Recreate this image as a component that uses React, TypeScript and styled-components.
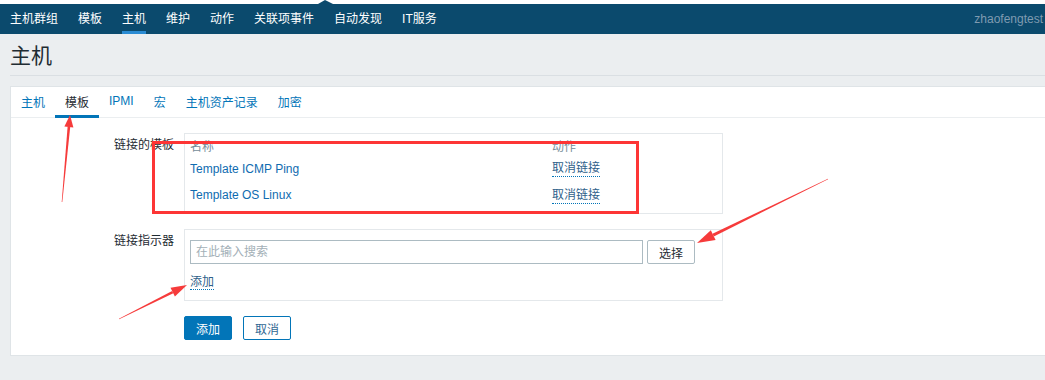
import styled, { createGlobalStyle } from "styled-components";

const GlobalStyle = createGlobalStyle`
  html, body {
    margin: 0;
    padding: 0;
    background: #ebeef0;
    overflow: hidden;
  }
  body {
    font-family: "Liberation Sans", "Noto Sans CJK SC", sans-serif;
    font-size: 12px;
    color: #1f2c33;
  }
  * {
    box-sizing: border-box;
  }
`;

const Page = styled.div`
  position: relative;
  width: 1045px;
  height: 380px;
  overflow: hidden;
`;

const TopStrip = styled.div`
  background: #ffffff;
  padding-top: 4px;
`;

const TopNav = styled.nav`
  position: relative;
  display: flex;
  align-items: stretch;
  height: 30px;
  background: #0b4a6d;

  &::before {
    content: "";
    position: absolute;
    top: -4px;
    left: 318px;
    border-left: 7px solid transparent;
    border-right: 8px solid transparent;
    border-bottom: 4px solid #0b4a6d;
  }
`;

const NavItem = styled.a<{ $active?: boolean }>`
  display: flex;
  align-items: center;
  margin: 0 10px;
  padding-top: 3px;
  border-bottom: 3px solid ${(p) => (p.$active ? "#2a8bd3" : "transparent")};
  color: #ffffff;
  text-decoration: none;
  white-space: nowrap;
  line-height: 16px;
`;

const UserName = styled.span`
  display: flex;
  align-items: center;
  margin-left: auto;
  margin-right: 2px;
  color: #7f9bb1;
  white-space: nowrap;
`;

const Header = styled.header`
  display: flex;
  align-items: center;
  height: 42px;
  margin-left: 10px;
  padding-top: 3px;
  border-bottom: 1px solid #dadfe3;
`;

const Title = styled.h1`
  margin: 0;
  font-size: 21px;
  font-weight: normal;
  line-height: 24px;
  color: #1f2c33;
`;

const Content = styled.main`
  padding: 10px 0 0 10px;
`;

const Panel = styled.section`
  background: #ffffff;
  border: 1px solid #dfe4e7;
  border-right: none;
`;

const TabList = styled.div`
  display: flex;
  height: 31px;
  border-bottom: 1px solid #ebeef0;
`;

const Tab = styled.a<{ $active?: boolean }>`
  display: flex;
  align-items: center;
  height: 31px;
  margin-bottom: -1px;
  padding: 0 10px;
  border-bottom: 3px solid ${(p) => (p.$active ? "#0275b8" : "transparent")};
  color: ${(p) => (p.$active ? "#1f2c33" : "#0275b8")};
  text-decoration: none;
  white-space: nowrap;
`;

const Form = styled.div`
  display: grid;
  grid-template-columns: 163px 539px;
  column-gap: 10px;
  row-gap: 15px;
  padding: 15px 0;
`;

const Label = styled.div`
  text-align: right;
  padding-top: 4px;
  line-height: 16px;
  color: #1f2c33;
`;

const FieldBox = styled.div<{ $pad?: string }>`
  border: 1px solid #e4e8eb;
  padding: ${(p) => p.$pad || "0 5px 4px"};
`;

const TableRow = styled.div<{ $h: number; $head?: boolean }>`
  display: grid;
  grid-template-columns: 362px 1fr;
  align-items: center;
  height: ${(p) => p.$h}px;
  color: ${(p) => (p.$head ? "#768d99" : "#1f2c33")};
`;

const Link = styled.a`
  color: #0f6cb0;
  text-decoration: none;
`;

const ActionLink = styled.a`
  justify-self: start;
  color: #2f5f8a;
  line-height: 16px;
  text-decoration: none;
  border-bottom: 1px dotted #0275b8;
`;

const SearchRow = styled.div`
  display: flex;
  gap: 4px;
`;

const SearchInput = styled.input`
  width: 453px;
  height: 24px;
  padding: 0 5px;
  border: 1px solid #acbbc2;
  font-family: inherit;
  font-size: 12px;
  color: #1f2c33;

  &::placeholder {
    color: #a3b0b7;
  }
`;

const Button = styled.button<{ $variant?: "primary" | "outline" | "plain" }>`
  height: 24px;
  padding: 0 11px;
  border-radius: 2px;
  font-family: inherit;
  font-size: 12px;
  cursor: pointer;
  border: 1px solid
    ${(p) => (p.$variant === "plain" ? "#acbbc2" : "#0275b8")};
  background: ${(p) => (p.$variant === "primary" ? "#0275b8" : "#ffffff")};
  color: ${(p) =>
    p.$variant === "primary"
      ? "#ffffff"
      : p.$variant === "outline"
      ? "#2f6793"
      : "#1f2c33"};
`;

const AddRow = styled.div`
  margin-top: 10px;
  height: 17px;
`;

const Actions = styled.div`
  grid-column: 2;
  display: flex;
  gap: 11px;
`;

const Overlay = styled.svg`
  position: absolute;
  left: 0;
  top: 0;
  pointer-events: none;
`;

const navItems = ["主机群组", "模板", "主机", "维护", "动作", "关联项事件", "自动发现", "IT服务"];
const tabs = ["主机", "模板", "IPMI", "宏", "主机资产记录", "加密"];
const templates = ["Template ICMP Ping", "Template OS Linux"];

// red hand-drawn annotation arrows, tail -> tip
const arrows = [
  { tx: 62, ty: 202, hx: 70, hy: 115, len: 12, w: 9, sw: 2.6 },
  { tx: 828, ty: 179, hx: 697, hy: 243, len: 18, w: 11, sw: 3 },
  { tx: 119, ty: 319, hx: 187, hy: 285, len: 16, w: 10, sw: 2.6 },
];

function arrowShapes(a: (typeof arrows)[number]) {
  const dx = a.hx - a.tx;
  const dy = a.hy - a.ty;
  const l = Math.hypot(dx, dy);
  const ux = dx / l;
  const uy = dy / l;
  const nx = -uy;
  const ny = ux;
  const bx = a.hx - ux * a.len;
  const by = a.hy - uy * a.len;
  const pt = (x: number, y: number) => `${x.toFixed(1)},${y.toFixed(1)}`;
  const shaft = [
    pt(a.tx + nx * 0.3, a.ty + ny * 0.3),
    pt(bx + nx * (a.sw / 2), by + ny * (a.sw / 2)),
    pt(bx - nx * (a.sw / 2), by - ny * (a.sw / 2)),
    pt(a.tx - nx * 0.3, a.ty - ny * 0.3),
  ].join(" ");
  const head = [
    pt(a.hx, a.hy),
    pt(bx + nx * (a.w / 2), by + ny * (a.w / 2)),
    pt(bx - nx * (a.w / 2), by - ny * (a.w / 2)),
  ].join(" ");
  return { shaft, head };
}

function App() {
  return (
    <Page>
      <GlobalStyle />
      <TopStrip>
        <TopNav>
          {navItems.map((item) => (
            <NavItem key={item} $active={item === "主机"}>
              {item}
            </NavItem>
          ))}
          <UserName>zhaofengtest</UserName>
        </TopNav>
      </TopStrip>

      <Header>
        <Title>主机</Title>
      </Header>

      <Content>
        <Panel>
          <TabList>
            {tabs.map((t) => (
              <Tab key={t} $active={t === "模板"}>
                {t}
              </Tab>
            ))}
          </TabList>

          <Form>
            <Label>链接的模板</Label>
            <FieldBox>
              <TableRow $h={22} $head>
                <span>名称</span>
                <span>动作</span>
              </TableRow>
              {templates.map((t, i) => (
                <TableRow key={t} $h={i === 0 ? 25 : 28}>
                  <Link>{t}</Link>
                  <ActionLink>取消链接</ActionLink>
                </TableRow>
              ))}
            </FieldBox>

            <Label>链接指示器</Label>
            <FieldBox $pad="10px 5px 9px">
              <SearchRow>
                <SearchInput placeholder="在此输入搜索" />
                <Button $variant="plain">选择</Button>
              </SearchRow>
              <AddRow>
                <ActionLink>添加</ActionLink>
              </AddRow>
            </FieldBox>

            <Actions>
              <Button $variant="primary">添加</Button>
              <Button $variant="outline">取消</Button>
            </Actions>
          </Form>
        </Panel>
      </Content>

      <Overlay width={1045} height={380} viewBox="0 0 1045 380">
        <rect
          x={153.5}
          y={142.5}
          width={484}
          height={70}
          fill="none"
          stroke="#fd3535"
          strokeWidth={3}
        />
        {arrows.map((a, i) => {
          const s = arrowShapes(a);
          return (
            <g key={i} fill="#f63b3b">
              <polygon points={s.shaft} />
              <polygon points={s.head} />
            </g>
          );
        })}
      </Overlay>
    </Page>
  );
}

export default App;
